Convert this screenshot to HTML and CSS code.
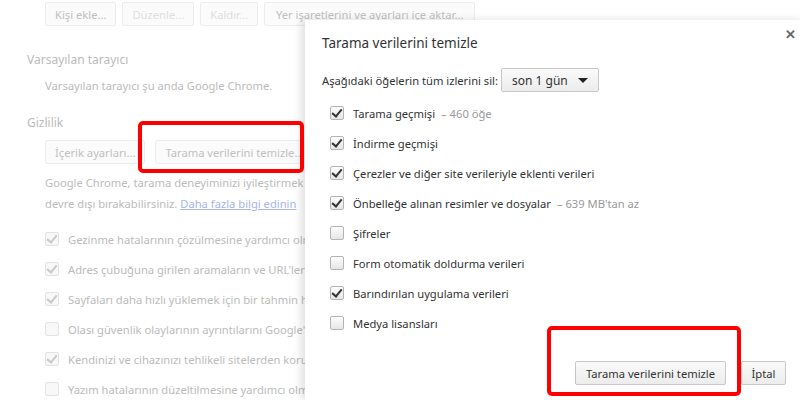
FILE: index.html
```html
<!DOCTYPE html>
<html lang="tr">
<head>
    <meta charset="UTF-8">
    <title>Ayarlar</title>
    <link rel="stylesheet" href="styles.css">
</head>
<body>

    <div class="settings">
        <div class="btn-row top">
            <button class="btn">Kişi ekle...</button>
            <button class="btn off">Düzenle...</button>
            <button class="btn off">Kaldır...</button>
            <button class="btn">Yer işaretlerini ve ayarları içe aktar...</button>
        </div>

        <h3 class="section">Varsayılan tarayıcı</h3>
        <p class="line">Varsayılan tarayıcı şu anda Google Chrome.</p>

        <h3 class="section privacy">Gizlilik</h3>
        <div class="btn-row wide">
            <button class="btn">İçerik ayarları...</button>
            <button class="btn">Tarama verilerini temizle...</button>
        </div>
        <p class="para">Google Chrome, tarama deneyiminizi iyileştirmek için web hizmetlerini kullanabilir. İsteğe bağlı olarak bu hizmetleri<br>devre dışı bırakabilirsiniz. <a href="#">Daha fazla bilgi edinin</a></p>

        <ul class="checks">
            <li><span class="cb on"></span>Gezinme hatalarının çözülmesine yardımcı olması için bir web hizmeti kullan</li>
            <li><span class="cb on"></span>Adres çubuğuna girilen aramaların ve URL'lerin tamamlanmasına yardımcı olması için bir tahmin hizmeti kullan</li>
            <li><span class="cb on"></span>Sayfaları daha hızlı yüklemek için bir tahmin hizmeti kullan</li>
            <li><span class="cb"></span>Olası güvenlik olaylarının ayrıntılarını Google'a otomatik olarak bildir</li>
            <li><span class="cb on"></span>Kendinizi ve cihazınızı tehlikeli sitelerden koruyun</li>
            <li><span class="cb"></span>Yazım hatalarının düzeltilmesine yardımcı olması için bir web hizmeti kullan</li>
        </ul>
    </div>

    <div class="dialog">
        <div class="dialog-head">
            <h2>Tarama verilerini temizle</h2>
            <span class="close">&#x2715;</span>
        </div>
        <div class="period">
            <span>Aşağıdaki öğelerin tüm izlerini sil:</span>
            <div class="select">son 1 gün <span class="arrow"></span></div>
        </div>
        <ul class="items">
            <li><span class="cb on"></span>Tarama geçmişi <span class="note">&ndash; 460 öğe</span></li>
            <li><span class="cb on"></span>İndirme geçmişi</li>
            <li><span class="cb on"></span>Çerezler ve diğer site verileriyle eklenti verileri</li>
            <li><span class="cb on"></span>Önbelleğe alınan resimler ve dosyalar <span class="note">&ndash; 639 MB'tan az</span></li>
            <li><span class="cb"></span>Şifreler</li>
            <li><span class="cb"></span>Form otomatik doldurma verileri</li>
            <li><span class="cb on"></span>Barındırılan uygulama verileri</li>
            <li><span class="cb"></span>Medya lisansları</li>
        </ul>
        <div class="actions">
            <button class="btn main">Tarama verilerini temizle</button>
            <button class="btn">İptal</button>
        </div>
    </div>

    <!-- highlight boxes from the screenshot -->
    <div class="mark mark-left"></div>
    <div class="mark mark-right"></div>

</body>
</html>
```

FILE: styles.css
```css
body {
    margin: 0;
    background: #fff;
    font-family: "Noto Sans", "Open Sans", sans-serif;
    font-size: 11.2px;
    color: #333;
    width: 800px;
    height: 400px;
    overflow: hidden;
    position: relative;
}

.settings {
    padding-left: 27px;
    color: #bbb;
    white-space: nowrap;
}

.btn {
    font-family: inherit;
    font-size: 11.2px;
    color: #444;
    height: 24px;
    padding: 0 9px;
    border: 1px solid #c8c8c8;
    border-radius: 2px;
    background: linear-gradient(#fafafa, #ececec);
    white-space: nowrap;
    cursor: pointer;
}

.settings .btn {
    color: #c0c0c0;
    border-color: #ececec;
    background: #fbfbfb;
}

.settings .btn.off {
    color: #dedede;
}

.btn-row {
    display: flex;
    gap: 6px;
    padding-left: 18px;
}

.btn-row.top {
    margin-top: 2px;
}

.btn-row.top .btn:last-child {
    padding: 0 11px;
}

.btn-row.wide {
    gap: 10px;
    margin-top: 7px;
}

.section {
    margin: 24px 0 0;
    font-size: 12px;
    font-weight: normal;
    line-height: 20px;
}

.section.privacy {
    margin-top: 17px;
}

.line {
    margin: 6px 0 0 18px;
    line-height: 20px;
}

.para {
    margin: 8px 0 0 18px;
    line-height: 21px;
}

.para a {
    color: #a8b4ea;
}

.checks,
.items {
    list-style: none;
    margin: 0;
    padding: 0;
}

.checks {
    width: 260px;
    overflow: hidden;
    margin: 10px 0 0 18px;
}

.checks li,
.items li {
    display: flex;
    align-items: center;
    height: 30px;
    white-space: nowrap;
}

.cb {
    flex: none;
    width: 12px;
    height: 12px;
    margin-right: 9px;
    border: 1px solid #b4b4b4;
    border-radius: 2px;
    background: linear-gradient(#fdfdfd, #e6e6e6);
    position: relative;
}

.cb.on::after {
    content: "";
    position: absolute;
    left: 3px;
    top: 0px;
    width: 4px;
    height: 8px;
    border: solid #333;
    border-width: 0 2px 2px 0;
    transform: rotate(40deg);
}

.settings .cb {
    border-color: #e2e2e2;
    background: #f8f8f8;
}

.settings .cb.on::after {
    border-color: #c8c8c8;
}

.dialog {
    position: absolute;
    left: 305px;
    top: 20px;
    width: 500px;
    height: 380px;
    background: #fff;
    box-shadow: -4px 0 8px rgba(0, 0, 0, 0.12);
    padding: 0 19px 0 17px;
    box-sizing: border-box;
}

.dialog-head {
    display: flex;
    align-items: center;
    height: 46px;
}

.dialog-head h2 {
    margin: 0;
    font-size: 13.5px;
    font-weight: normal;
    color: #333;
}

.close {
    position: absolute;
    left: 480px;
    top: 5px;
    font-size: 13px;
    font-weight: bold;
    color: #666;
}

.period {
    display: flex;
    align-items: center;
    gap: 3px;
    height: 28px;
}

.select {
    display: flex;
    align-items: center;
    justify-content: space-between;
    box-sizing: border-box;
    width: 98px;
    height: 24px;
    padding: 0 10px 0 10px;
    border: 1px solid #c8c8c8;
    border-radius: 2px;
    background: linear-gradient(#fafafa, #ececec);
    font-size: 12px;
}

.arrow {
    width: 0;
    height: 0;
    border-left: 5px solid transparent;
    border-right: 5px solid transparent;
    border-top: 5px solid #222;
}

.items {
    margin: 4px 0 0 8px;
}

.note {
    color: #999;
    margin-left: 6px;
}

.actions {
    display: flex;
    justify-content: flex-end;
    gap: 15px;
    margin-top: 23px;
}

.actions .btn {
    height: 24px;
    color: #333;
}

.actions .main {
    padding: 0 10px;
}

.actions .main + .btn {
    width: 45px;
    padding: 0;
}

.mark {
    position: absolute;
    border: 4px solid #ff0000;
    border-radius: 5px;
}

.mark-left {
    left: 138px;
    top: 121px;
    width: 158px;
    height: 44px;
}

.mark-right {
    left: 547px;
    top: 326px;
    width: 186px;
    height: 62px;
}
```
